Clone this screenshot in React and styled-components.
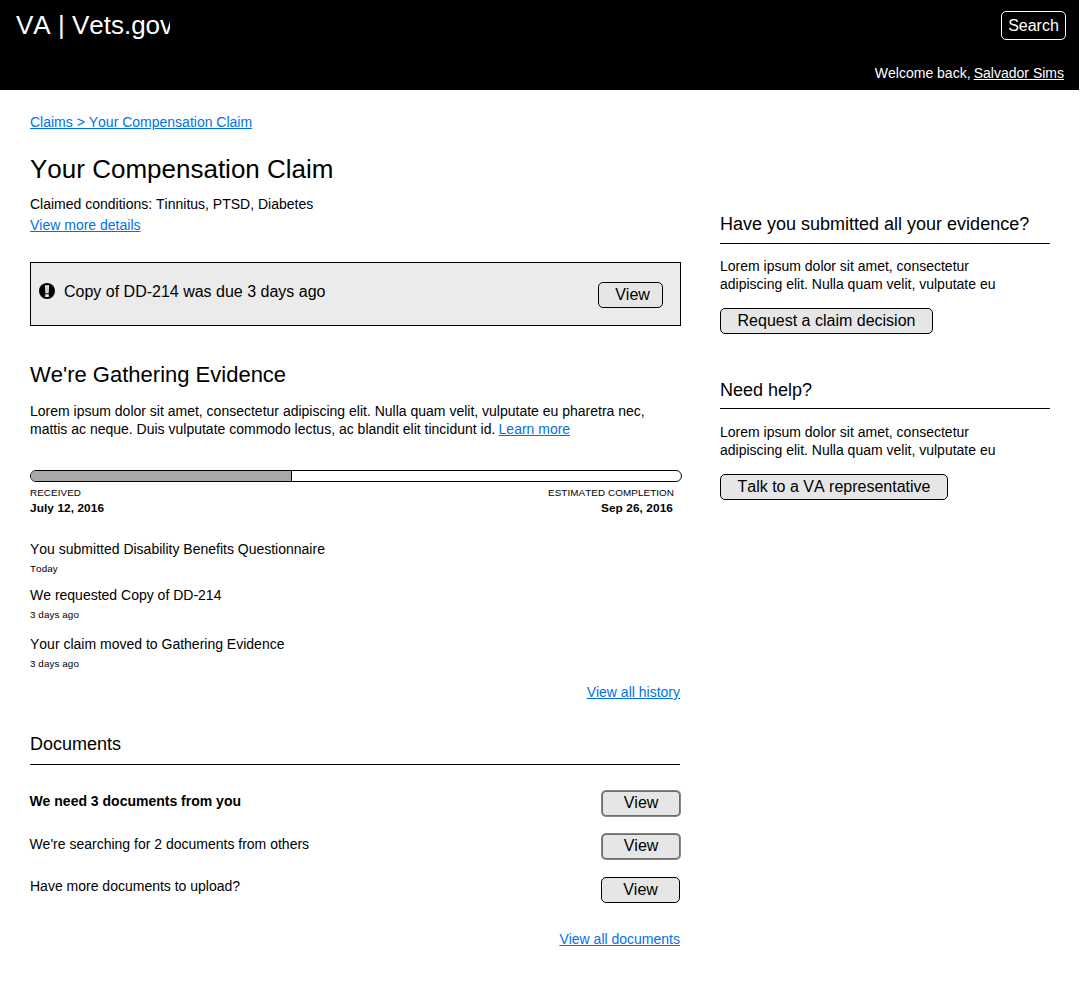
import React from "react";
import styled, { createGlobalStyle } from "styled-components";

const GlobalStyle = createGlobalStyle`
  * { box-sizing: border-box; }
  body {
    margin: 0;
    background: #fff;
    color: #000;
    font-family: "Liberation Sans", Arial, sans-serif;
    font-size: 14px;
    line-height: 18px;
    font-kerning: none;
  }
  h1, h2, h3, p, ul { margin: 0; padding: 0; font-weight: 400; }
  ul { list-style: none; }
`;

const Header = styled.header`
  display: flex;
  flex-direction: column;
  justify-content: space-between;
  width: 1079px;
  height: 90px;
  padding: 10px 13px 8px 16px;
  background: #000;
  color: #fff;
`;

const HeaderRow = styled.div`
  display: flex;
  justify-content: ${(p) => (p.$end ? "flex-end" : "space-between")};
  align-items: flex-start;
  padding-right: ${(p) => (p.$end ? "2px" : "0")};
`;

const Brand = styled.div`
  width: 154px;
  overflow: hidden;
  white-space: nowrap;
  font-size: 26px;
  line-height: 30px;
`;

const SearchButton = styled.button`
  width: 65px;
  height: 29px;
  margin-top: 1px;
  padding: 0;
  border: 1px solid #fff;
  border-radius: 5px;
  background: #000;
  color: #fff;
  font: 16px/27px "Liberation Sans", Arial, sans-serif;
  font-kerning: none;
`;

const Link = styled.a`
  margin-left: ${(p) => (p.$tight ? -0.7 : 0)}px;
  color: ${(p) => (p.$light ? "#fff" : "#0071eb")};
  text-decoration: underline;
`;

const Page = styled.main`
  display: grid;
  grid-template-columns: 652px 331px;
  column-gap: 38px;
  align-items: start;
  padding: 23px 0 0 30px;
`;

const Column = styled.div`
  display: flex;
  flex-direction: column;
  padding-top: ${(p) => p.$top || 0}px;
`;

const Title = styled.h1`
  margin-top: 23px;
  font-size: 26px;
  line-height: 30px;
`;

const Text = styled.p`
  margin-top: ${(p) => p.$gap || 0}px;
  line-height: ${(p) => p.$leading || 18}px;
`;

const Alert = styled.section`
  display: flex;
  justify-content: space-between;
  width: 651px;
  height: 64px;
  margin-top: 26px;
  padding: 19px 17px 0 8px;
  border: 1px solid #000;
  background: #ebebeb;
`;

const AlertMessage = styled.div`
  display: flex;
  align-items: flex-start;
  gap: 9px;
  font-size: 16px;
  line-height: 20px;

  svg { margin-top: 1px; }
`;

const Button = styled.button`
  flex: none;
  display: flex;
  justify-content: center;
  width: ${(p) => p.$width}px;
  height: ${(p) => (p.$soft ? 25 : 26)}px;
  margin: ${(p) => (p.$soft ? "0 1px 0 0" : "0")};
  padding: 0 0 0 ${(p) => p.$shift || 0}px;
  border: 1px solid ${(p) => (p.$soft ? "#6c6c6c" : "#000")};
  border-radius: ${(p) => (p.$soft ? 4 : 5)}px;
  box-shadow: ${(p) => (p.$soft ? "0 0 0 1px #868686" : "none")};
  background: #e6e6e6;
  color: #000;
  font: 16px/${(p) => (p.$soft ? 22 : 24)}px "Liberation Sans", Arial, sans-serif;
  font-kerning: none;
`;

const Actions = styled.div`
  display: flex;
  margin-top: 15px;
`;

const StageTitle = styled.h2`
  margin-top: 36px;
  font-size: 22px;
  line-height: 26px;
`;

const Track = styled.div`
  height: 12px;
  margin-top: 32px;
  border: 1px solid #000;
  border-radius: 6px;
  overflow: hidden;
`;

const Fill = styled.div`
  width: 261px;
  height: 100%;
  border-right: 1px solid #000;
  background: #a9a9a9;
`;

const Dates = styled.div`
  display: flex;
  justify-content: space-between;
  margin-top: 4px;
  padding-right: 8px;
`;

const DateLabel = styled.div`
  text-align: ${(p) => (p.$end ? "right" : "left")};
  font-size: 9.9px;
  letter-spacing: 0.07px;
  line-height: 14px;

  strong {
    display: block;
    margin-right: ${(p) => (p.$end ? "1px" : "0")};
    font-size: 11.8px;
    letter-spacing: 0.1px;
    line-height: 16px;
  }
`;

const Event = styled.li`
  height: ${(p) => p.$height || 46}px;

  small {
    display: block;
    margin-top: 5px;
    font-size: 9.8px;
    letter-spacing: 0.1px;
    line-height: 12px;
  }
`;

const History = styled.ul`
  margin-top: 24px;
`;

const EndLink = styled.div`
  width: 650px;
  margin-top: ${(p) => p.$gap}px;
  text-align: right;
`;

const SectionTitle = styled.h3`
  width: ${(p) => p.$width}px;
  margin-top: ${(p) => p.$gap || 0}px;
  height: ${(p) => p.$height || 31}px;
  border-bottom: 1px solid #000;
  font-size: 18px;
  line-height: 20px;
`;

const DocumentRow = styled.li`
  display: flex;
  justify-content: space-between;
  width: ${(p) => p.$width || 651}px;
  height: 43px;
  font-weight: ${(p) => (p.$bold ? 700 : 400)};

  span {
    margin-left: ${(p) => (p.$raised ? 0 : -0.6)}px;
    padding-top: ${(p) => (p.$raised ? 0 : 1)}px;
  }
`;

const Documents = styled.ul`
  margin-top: 26px;
`;

const AlertIcon = () => (
  <svg width="16" height="16" viewBox="0 0 16 16" aria-hidden="true">
    <circle cx="8" cy="8" r="8" />
    <path d="M5.900 2.200H10.100L9.600 10.200H6.400Z" fill="#ebebeb" />
    <path d="M7.500 3.500H8.500V9H7.500Z" fill="#a8a8a8" />
    <rect x="6.200" y="11.200" width="3.600" height="2.700" rx="0.300" fill="#ebebeb" />
  </svg>
);

const AsideText = () => (
  <>
    Lorem ipsum dolor sit amet, consectetur
    <br />
    adipiscing elit. Nulla quam velit, vulputate eu
  </>
);

export default function App() {
  return (
    <>
      <GlobalStyle />
      <Header>
        <HeaderRow>
          <Brand>VA | Vets.gov</Brand>
          <SearchButton>Search</SearchButton>
        </HeaderRow>
        <HeaderRow $end>
          <span>
            Welcome back, <Link $light $tight>Salvador Sims</Link>
          </span>
        </HeaderRow>
      </Header>
      <Page>
        <Column>
          <Text><Link>Claims &gt; Your Compensation Claim</Link></Text>
          <Title>Your Compensation Claim</Title>
          <Text $gap={10} $leading={21}>
            Claimed conditions: Tinnitus, PTSD, Diabetes
            <br />
            <Link>View more details</Link>
          </Text>
          <Alert>
            <AlertMessage>
              <AlertIcon />
              Copy of DD-214 was due 3 days ago
            </AlertMessage>
            <Button $width={65} $shift={4}>View</Button>
          </Alert>
          <StageTitle>We're Gathering Evidence</StageTitle>
          <Text $gap={14}>
            Lorem ipsum dolor sit amet, consectetur adipiscing elit. Nulla quam velit, vulputate eu pharetra nec,
            <br />
            mattis ac neque. Duis vulputate commodo lectus, ac blandit elit tincidunt id. <Link $tight>Learn more</Link>
          </Text>
          <Track><Fill /></Track>
          <Dates>
            <DateLabel>RECEIVED<strong>July 12, 2016</strong></DateLabel>
            <DateLabel $end>ESTIMATED COMPLETION<strong>Sep 26, 2016</strong></DateLabel>
          </Dates>
          <History>
            <Event>You submitted Disability Benefits Questionnaire<small>Today</small></Event>
            <Event $height={49}>We requested Copy of DD-214<small>3 days ago</small></Event>
            <Event>Your claim moved to Gathering Evidence<small>3 days ago</small></Event>
          </History>
          <EndLink $gap={2}><Link>View all history</Link></EndLink>
          <SectionTitle $width={650} $gap={33}>Documents</SectionTitle>
          <Documents>
            <DocumentRow $bold><span>We need 3 documents from you</span><Button $width={78} $soft>View</Button></DocumentRow>
            <DocumentRow><span>We're searching for 2 documents from others</span><Button $width={78} $soft>View</Button></DocumentRow>
            <DocumentRow $width={650} $raised><span>Have more documents to upload?</span><Button $width={79}>View</Button></DocumentRow>
          </Documents>
          <EndLink $gap={10}><Link>View all documents</Link></EndLink>
        </Column>
        <Column $top={101}>
          <SectionTitle $width={330} $height={30}>Have you submitted all your evidence?</SectionTitle>
          <Text $gap={13}><AsideText /></Text>
          <Actions><Button $width={213}>Request a claim decision</Button></Actions>
          <SectionTitle $width={330} $gap={46} $height={29}>Need help?</SectionTitle>
          <Text $gap={14}><AsideText /></Text>
          <Actions><Button $width={228}>Talk to a VA representative</Button></Actions>
        </Column>
      </Page>
    </>
  );
}
